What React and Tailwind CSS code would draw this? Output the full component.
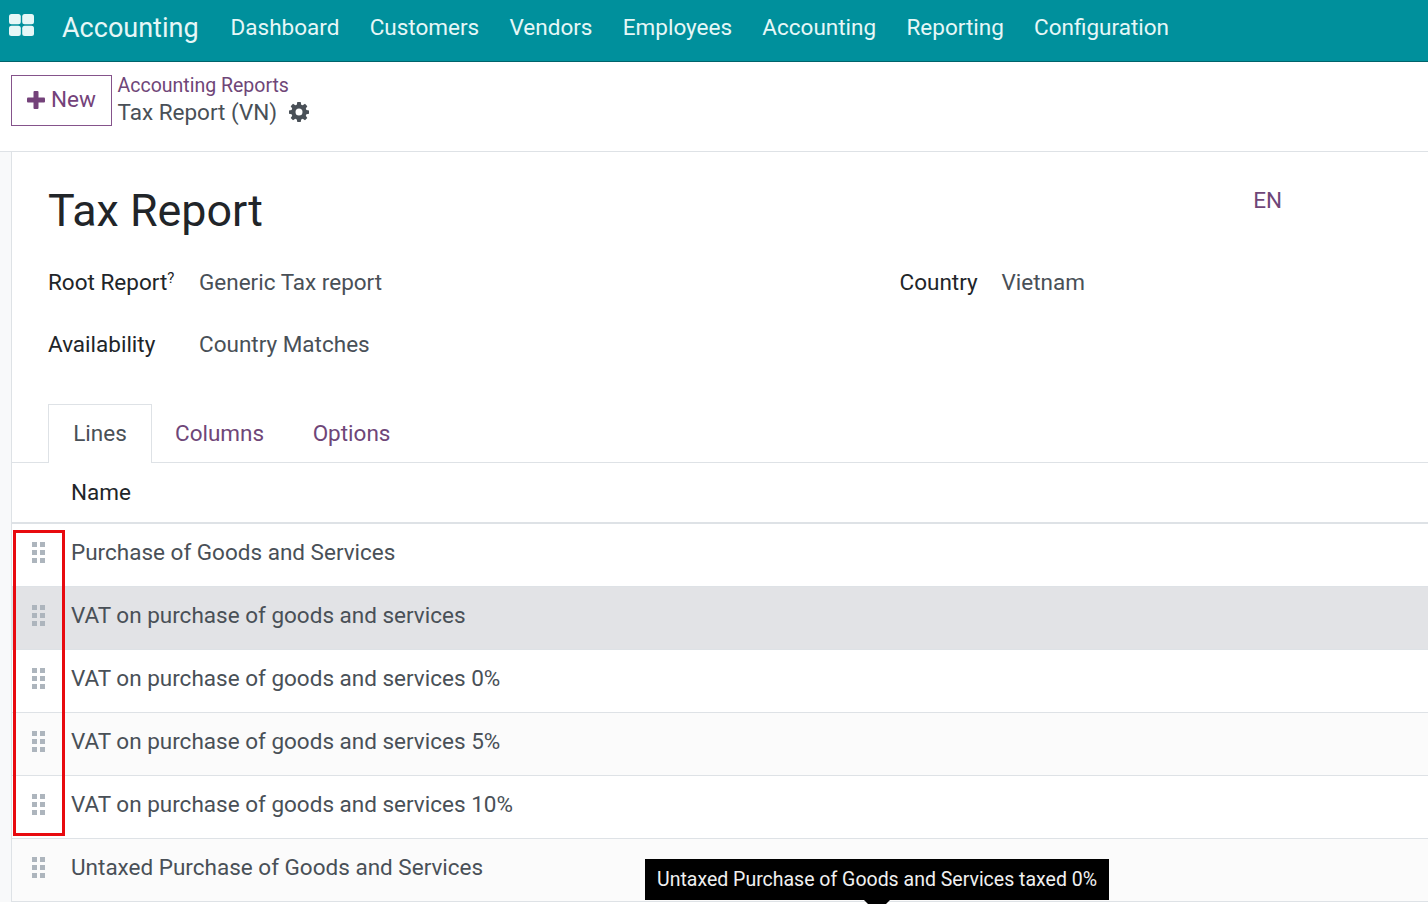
const navItems = ["Dashboard", "Customers", "Vendors", "Employees", "Accounting", "Reporting", "Configuration"];

const rows = [
    { name: "Purchase of Goods and Services", bg: "bg-white" },
    { name: "VAT on purchase of goods and services", bg: "bg-[#e2e3e6]" },
    { name: "VAT on purchase of goods and services 0%", bg: "bg-white" },
    { name: "VAT on purchase of goods and services 5%", bg: "bg-[#fbfbfb]" },
    { name: "VAT on purchase of goods and services 10%", bg: "bg-white" },
    { name: "Untaxed Purchase of Goods and Services", bg: "bg-[#fbfbfb]" },
];

const AppsIcon = () => (
    <svg width="25" height="22" viewBox="0 0 25 22" fill="#e6f7f7">
        <rect x="0" y="0" width="11.8" height="10.3" rx="2.5" />
        <rect x="13.2" y="0" width="11.8" height="10.3" rx="2.5" />
        <rect x="0" y="11.7" width="11.8" height="10.3" rx="2.5" />
        <rect x="13.2" y="11.7" width="11.8" height="10.3" rx="2.5" />
    </svg>
);

const PlusIcon = () => (
    <svg width="18" height="18" viewBox="0 0 18 18" fill="#74427a">
        <rect x="6.5" y="0" width="5" height="18" rx="1" />
        <rect x="0" y="6.5" width="18" height="5" rx="1" />
    </svg>
);

const CogIcon = () => (
    <svg width="20" height="20" viewBox="0 0 20 20" fill="#495057">
        <path
            fillRule="evenodd"
            d="M8.3 0h3.4l.5 2.7 1.5.6L16 1.8l2.3 2.4-1.5 2.2.6 1.5 2.6.5v3.3l-2.6.5-.6 1.5 1.5 2.2-2.3 2.4-2.3-1.5-1.5.6-.5 2.6H8.3l-.5-2.6-1.5-.6L4 18.3l-2.3-2.4 1.5-2.2-.6-1.5L0 11.7V8.4l2.6-.5.6-1.5-1.5-2.2L4 1.8l2.3 1.5 1.5-.6zM10 6.5a3.5 3.5 0 1 0 0 7 3.5 3.5 0 0 0 0-7z"
        />
    </svg>
);

const DragHandle = () => (
    <svg width="13" height="21" viewBox="0 0 13 21" fill="#adb5bd">
        <rect x="0" y="0" width="5" height="5" />
        <rect x="8" y="0" width="5" height="5" />
        <rect x="0" y="8" width="5" height="5" />
        <rect x="8" y="8" width="5" height="5" />
        <rect x="0" y="16" width="5" height="5" />
        <rect x="8" y="16" width="5" height="5" />
    </svg>
);

const App = () => {
    return (
        <div className="relative h-[904px] overflow-hidden bg-white font-['Roboto',sans-serif] text-[22.5px] text-[#495057]">
            <nav className="flex h-[62px] items-center border-b border-[#00636b] bg-[#00909c] pb-[5px] text-[#e6f7f7]">
                <div className="ml-[9px] mr-[28px] mb-[7px]">
                    <AppsIcon />
                </div>
                <span className="mr-[32px] text-[27px]">Accounting</span>
                <div className="flex gap-[30.3px]">
                    {navItems.map((item) => (
                        <span key={item}>{item}</span>
                    ))}
                </div>
            </nav>

            <div className="flex h-[90px] items-start border-b border-[#dee2e6] pl-[11px] pt-[13px]">
                <button className="mr-[5.5px] flex h-[51px] w-[101px] items-center justify-center gap-[6px] border border-[#85538b] pb-[2px] text-[#74427a]">
                    <PlusIcon />
                    New
                </button>
                <div className="flex flex-col">
                    <span className="text-[19.5px] leading-[22px] text-[#6f4678]">Accounting Reports</span>
                    <div className="flex items-center gap-[11.5px] leading-[30px]">
                        <span>Tax Report (VN)</span>
                        <CogIcon />
                    </div>
                </div>
            </div>

            <div className="flex">
                <div className="w-[12px] shrink-0 self-stretch border-r border-[#dee2e6] bg-[#f8f9fa]" />
                <div className="min-w-0 flex-1">
                    <div className="flex items-start justify-between pl-[36px] pr-[146px] pt-[31px]">
                        <h1 className="mt-px text-[44.8px] leading-[54px] text-[#212529]">Tax Report</h1>
                        <span className="mt-px text-[#6f4678]">EN</span>
                    </div>

                    <div className="mt-[22px] flex pl-[36px]">
                        <div className="w-[851.5px]">
                            <div className="flex h-[62px] leading-[44px]">
                                <span className="w-[151px] text-[#212529]">
                                    Root Report<sup className="text-[15px]">?</sup>
                                </span>
                                <span>Generic Tax report</span>
                            </div>
                            <div className="flex h-[62px] leading-[44px]">
                                <span className="w-[151px] text-[#212529]">Availability</span>
                                <span>Country Matches</span>
                            </div>
                        </div>
                        <div className="flex h-[62px] leading-[44px]">
                            <span className="w-[102px] text-[#212529]">Country</span>
                            <span>Vietnam</span>
                        </div>
                    </div>

                    <div className="mt-[20px] flex h-[59px] border-b border-[#dee2e6] pl-[36px]">
                        <div className="flex h-[59px] w-[104px] items-center justify-center border border-b-0 border-[#dee2e6] bg-white">
                            Lines
                        </div>
                        <div className="flex items-center gap-[48.5px] pl-[23px] pt-[2px] text-[#6f4678]">
                            <span>Columns</span>
                            <span>Options</span>
                        </div>
                    </div>

                    <div className="flex h-[61px] items-center border-b-2 border-[#dee2e6] pl-[59px] text-[#212529]">
                        Name
                    </div>

                    {rows.map((row) => (
                        <div
                            key={row.name}
                            className={`flex h-[63px] items-center border-b border-[#dee2e6] ${row.bg}`}
                        >
                            <div className="flex w-[59px] shrink-0 justify-center pr-[6px] pb-[5px]">
                                <DragHandle />
                            </div>
                            <span className="pb-[4px]">{row.name}</span>
                        </div>
                    ))}
                </div>
            </div>

            <div className="absolute left-[13px] top-[530px] h-[306px] w-[52px] border-[3px] border-[#e80a0f]" />

            <div className="absolute left-[645px] top-[859px] flex h-[41px] w-[464px] items-center justify-center bg-black text-[19.5px] text-[#f0f0f0]">
                Untaxed Purchase of Goods and Services taxed 0%
            </div>
            <div className="absolute left-[864px] top-[900px] h-0 w-0 border-x-[13px] border-t-[13px] border-x-transparent border-t-black" />
        </div>
    );
};

export default App;
